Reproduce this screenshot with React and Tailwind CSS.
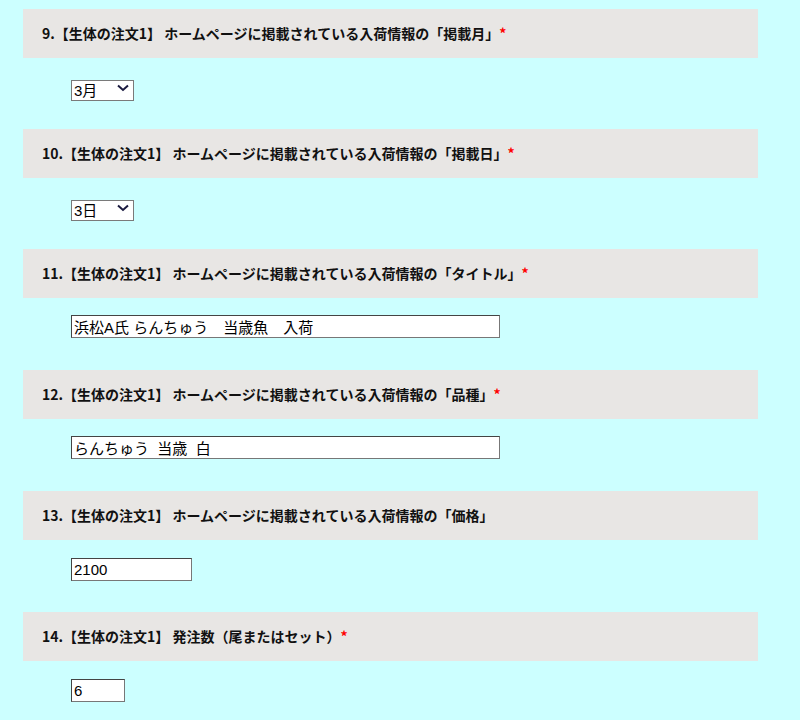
const LABEL_FONT = { fontFamily: '"Noto Sans CJK JP", "Liberation Sans", sans-serif' }
const FIELD_FONT = { fontFamily: '"Liberation Sans", "Noto Sans CJK JP", sans-serif' }

const items = [
  { no: '9.', text: '【生体の注文1】 ホームページに掲載されている入荷情報の「掲載月」', req: true, type: 'select', value: '3月' },
  { no: '10.', text: '【生体の注文1】 ホームページに掲載されている入荷情報の「掲載日」', req: true, type: 'select', value: '3日' },
  { no: '11.', text: '【生体の注文1】 ホームページに掲載されている入荷情報の「タイトル」', req: true, type: 'text', value: '浜松A氏 らんちゅう　当歳魚　入荷', w: 'w-[429px]' },
  { no: '12.', text: '【生体の注文1】 ホームページに掲載されている入荷情報の「品種」', req: true, type: 'text', value: 'らんちゅう  当歳  白', w: 'w-[429px]' },
  { no: '13.', text: '【生体の注文1】 ホームページに掲載されている入荷情報の「価格」', req: false, type: 'text', value: '2100', w: 'w-[121px]' },
  { no: '14.', text: '【生体の注文1】 発注数（尾またはセット）', req: true, type: 'text', value: '6', w: 'w-[54px]' },
]

function Chevron() {
  return (
    <svg width="12" height="8" viewBox="0 0 12 8" className="absolute right-[5px] top-[6px] pointer-events-none">
      <path d="M1 1.5 L6 6 L11 1.5" fill="none" stroke="#1a1a40" strokeWidth="2" />
    </svg>
  )
}

function Field({ item }) {
  if (item.type === 'select') {
    return (
      <div className="relative w-[63px] h-[21px] mt-[20px] mb-[30px] ml-[48px]">
        <select
          defaultValue={item.value}
          className="appearance-none w-full h-full bg-white border border-[#7a7a7a] pl-[2px] text-[15px] text-black leading-none outline-none"
          style={FIELD_FONT}
        >
          <option>{item.value}</option>
        </select>
        <Chevron />
      </div>
    )
  }
  return (
    <div className="mt-[17px] mb-[32px] ml-[48px] h-[23px]">
      <input
        type="text"
        defaultValue={item.value}
        className={`${item.w} h-[23px] bg-white border border-[#444] border-r-[#777] border-b-[#777] px-[2px] text-[15px] text-black outline-none`}
        style={FIELD_FONT}
      />
    </div>
  )
}

export default function App() {
  return (
    <div className="min-h-[720px] bg-[#ccffff] pt-[9px] pl-[23px]">
      {items.map((item) => (
        <div key={item.no}>
          <div className="w-[735px] h-[49px] bg-[#e8e6e4] flex items-center pl-[19px]">
            <span className="text-[14px] font-bold text-[#111]" style={LABEL_FONT}>
              {item.no}{item.text}
              {item.req && <span className="text-[#ff0000] font-bold">*</span>}
            </span>
          </div>
          <Field item={item} />
        </div>
      ))}
    </div>
  )
}
